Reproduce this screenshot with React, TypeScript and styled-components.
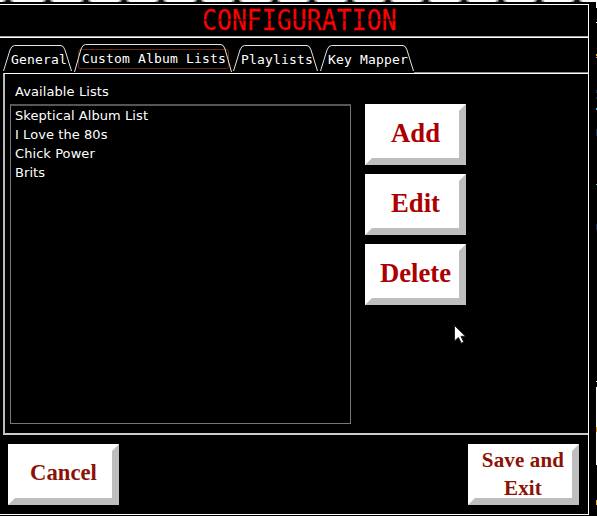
import React from "react";
import styled, { createGlobalStyle } from "styled-components";

const GlobalStyle = createGlobalStyle`
  * { box-sizing: border-box; }
  body { margin: 0; background: #000; overflow: hidden; }
`;

const Screen = styled.div`
  position: relative;
  display: flex;
  width: 597px;
  height: 516px;
  background: #000;
  overflow: hidden;
  cursor: default;
`;

const Window = styled.main`
  display: flex;
  flex-direction: column;
  width: 589px;
  height: 511px;
  margin-top: 4px;
  border: 1px solid #fff;
  border-left: 0;
`;

const Header = styled.header`
  display: flex;
  justify-content: center;
  height: 33px;
  border-bottom: 1px solid #fff;
  box-shadow: inset 0 -1px #aaa;
`;

const Title = styled.h1`
  margin: 0 0 0 11px;
  font: 28px/32px "DejaVu Sans Mono", monospace;
  white-space: nowrap;
  transform: scale(0.889, 1.03);
  color: transparent;
  -webkit-text-stroke: 0.3px transparent;
  background: linear-gradient(#ff0000 15px, #300000 15px, #300000 16px, #ff0000 16px);
  -webkit-background-clip: text;
  background-clip: text;
`;

const TabBar = styled.nav`
  display: flex;
  align-items: flex-end;
  height: 35px;
  padding-left: 3px;
  background: linear-gradient(#888, #888) right bottom / 174px 1px no-repeat;
`;

const Tab = styled.button<{ $width: number; $gap: number; $active?: boolean }>`
  position: relative;
  flex: none;
  width: ${(p) => p.$width}px;
  height: ${(p) => (p.$active ? 29 : 28)}px;
  margin: 0 ${(p) => p.$gap}px 0 0;
  padding: 2px 0 ${(p) => (p.$active ? 1 : 0)}px 8px;
  border: 0;
  background: transparent;
  color: #fff;
  text-align: left;
  white-space: nowrap;
  font: 13px/26px "DejaVu Sans Mono", monospace;
  letter-spacing: 0.174px;
`;

const TabOutline = styled.svg`
  position: absolute;
  left: 0;
  top: 0;
  overflow: visible;
  fill: none;
`;

const Panel = styled.section`
  display: flex;
  height: 362px;
  margin-left: 3px;
  border-top: 1px solid #fff;
  border-left: 2px solid #bbb;
  border-bottom: 2px solid #ccc;
`;

const ListColumn = styled.div`
  width: 341px;
  margin: 8px 0 0 5px;
  font: 13px/19px "DejaVu Sans", sans-serif;
  color: #fff;
`;

const ListLabel = styled.h2`
  height: 22px;
  margin: 0;
  padding: 0 5px;
  font: inherit;
  letter-spacing: 0.09px;
`;

const ListBox = styled.ul`
  height: 320px;
  margin: 0;
  padding: 1px 0 0 4px;
  border: 1px solid #777;
  border-top: 2px solid #555;
  list-style: none;
  letter-spacing: 0.07px;
`;

const ListItem = styled.li`
  height: 19px;
  line-height: 18px;
`;

const Actions = styled.div`
  display: flex;
  flex-direction: column;
  gap: 9px;
  margin: 30px 0 0 14px;
`;

const BevelButton = styled.button<{ $wide?: boolean; $size?: number; $lift?: number }>`
  width: ${(p) => (p.$wide ? 111 : 101)}px;
  height: 61px;
  padding: 0 0 ${(p) => p.$lift ?? 4}px 0;
  border: 7px solid;
  border-color: #fff #bebebe #bebebe #fff;
  background: #fff;
  color: ${(p) => (p.$wide ? "#8b1205" : "#ac0000")};
  font: bold ${(p) => p.$size ?? 26.7}px/28px "Liberation Serif", serif;
`;

const ButtonText = styled.span`
  display: block;
  margin: -6px 0 -4px -1px;
  letter-spacing: 0.15px;
`;

const Footer = styled.footer`
  display: flex;
  justify-content: space-between;
  padding: 9px 9px 0 8px;
`;

const Pointer = styled.svg`
  position: absolute;
  left: 454px;
  top: 325px;
`;

const Backdrop = styled.svg`
  position: absolute;
  left: 0;
  top: 0;
  pointer-events: none;
`;

const tabs = [
  { label: "General", width: 69, gap: 2 },
  { label: "Custom Album Lists", width: 158, gap: 1, active: true },
  { label: "Playlists", width: 85, gap: 2 },
  { label: "Key Mapper", width: 94, gap: 0 },
];

const lists = ["Skeptical Album List", "I Love the 80s", "Chick Power", "Brits"];
const notches = [8, 48, 86, 124, 161, 199, 237, 275, 312, 350, 388, 426, 464, 501, 539, 577];

export default function App() {
  return (
    <Screen>
      <GlobalStyle />
      <Window>
        <Header><Title>CONFIGURATION</Title></Header>
        <TabBar>
          {tabs.map(({ label, width: w, gap, active }) => (
            <Tab key={label} $width={w} $gap={gap} $active={active}>
              <TabOutline width={w} height={29}>
                {active && <rect x="4.5" y="5.5" width="150" height="19" rx="2" stroke="#66280c" />}
                <path
                  d={`M.5 ${active ? 28 : 26} L7 5 Q8.5 .5 11.5 .5 H${w - 11} Q${w - 8.5} .5 ${w - 7} 5 L${w - 0.5} ${active ? 28 : 26}`}
                  stroke="#e4e4e4"
                />
              </TabOutline>
              {label}
            </Tab>
          ))}
        </TabBar>
        <Panel>
          <ListColumn>
            <ListLabel>Available Lists</ListLabel>
            <ListBox>{lists.map((name) => <ListItem key={name}>{name}</ListItem>)}</ListBox>
          </ListColumn>
          <Actions>
            <BevelButton>Add</BevelButton>
            <BevelButton>Edit</BevelButton>
            <BevelButton>Delete</BevelButton>
          </Actions>
        </Panel>
        <Footer>
          <BevelButton $wide $size={22.7}>Cancel</BevelButton>
          <BevelButton $wide $size={21} $lift={0}><ButtonText>Save and<br />Exit</ButtonText></BevelButton>
        </Footer>
      </Window>
      <Backdrop width="597" height="516">
        <path d="M0 0H596V2H0Z" fill="#fff" />
        {notches.map((x) => (
          <g key={x}>
            <path d={`M${x - 6} 2 L${x - 4} 0 H${x + 4} L${x + 6} 2Z`} fill="#999" />
            <path d={`M${x - 3} 2 L${x - 2} 0 H${x + 2} L${x + 3} 2Z`} fill="#111" />
          </g>
        ))}
        <path d="M596 0H597V8H596ZM596 22h1v1h-1ZM596 381h1v1h-1ZM596 387h1v78h-1Z" fill="#fff" />
        <path d="M596 54h1v2h-1ZM596 57h1v1h-1ZM596 427h1v5h-1ZM596 500h1v5h-1Z" fill="#e8a820" />
        <path d="M596 90h1v3h-1ZM596 97h1v2h-1ZM596 129h1v7h-1ZM596 224h1v6h-1Z" fill="#12264d" />
        <path d="M596 108h1v2h-1ZM596 184h1v1h-1Z" fill="#59b4dd" />
      </Backdrop>
      <Pointer width="13" height="22">
        <path d="M.5 .5V16L4.4 12.4 7.3 18.2 9.7 17 7 11.3H11.5Z" fill="#fff" stroke="#222" />
      </Pointer>
    </Screen>
  );
}
